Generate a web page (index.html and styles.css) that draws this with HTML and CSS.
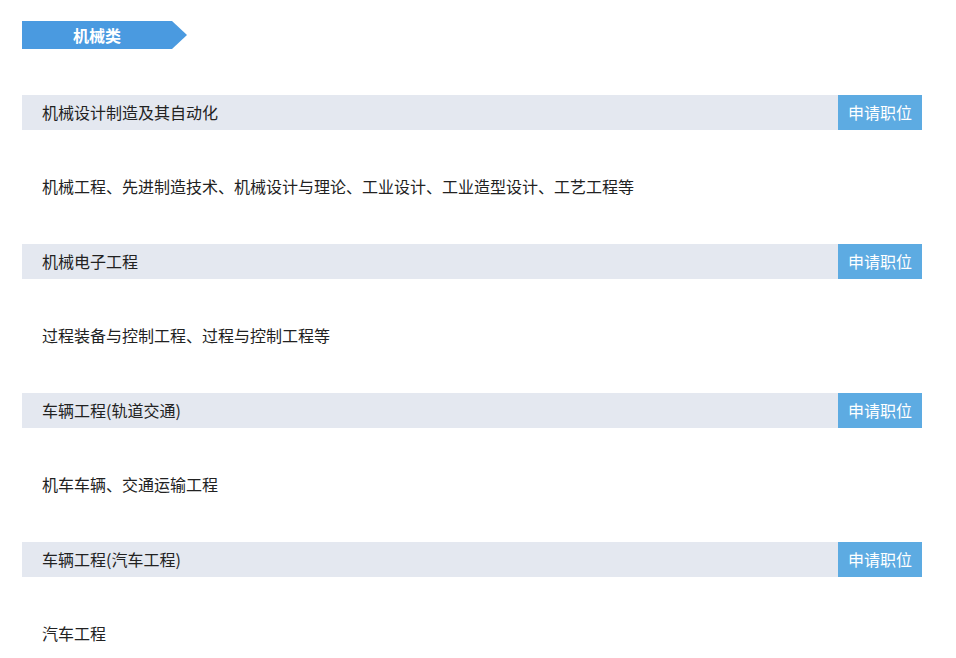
FILE: index.html
```html
<!DOCTYPE html>
<html lang="zh">
<head>
<meta charset="utf-8">
<title>机械类</title>
<link rel="stylesheet" href="styles.css">
</head>
<body>
<div class="page">
  <div class="tag"><span class="tag-text">机械类</span></div>
  <div class="list">
    <div class="item">
      <div class="item-head"><span class="item-title">机械设计制造及其自动化</span><a class="apply">申请职位</a></div>
      <div class="item-desc">机械工程、先进制造技术、机械设计与理论、工业设计、工业造型设计、工艺工程等</div>
    </div>
    <div class="item">
      <div class="item-head"><span class="item-title">机械电子工程</span><a class="apply">申请职位</a></div>
      <div class="item-desc">过程装备与控制工程、过程与控制工程等</div>
    </div>
    <div class="item">
      <div class="item-head"><span class="item-title">车辆工程(轨道交通)</span><a class="apply">申请职位</a></div>
      <div class="item-desc">机车车辆、交通运输工程</div>
    </div>
    <div class="item">
      <div class="item-head"><span class="item-title">车辆工程(汽车工程)</span><a class="apply">申请职位</a></div>
      <div class="item-desc">汽车工程</div>
    </div>
  </div>
</div>
</body>
</html>
```
FILE: styles.css
```css
html, body {
  margin: 0;
  padding: 0;
  background: #fff;
}
body {
  font-family: "Noto Sans CJK SC", "Noto Sans", sans-serif;
  font-size: 16px;
  color: #222;
}
.page {
  width: 900px;
  padding: 21px 0 0 22px;
}
.tag {
  display: flex;
  width: 165px;
  height: 28px;
  background: #4a9ae0;
  clip-path: polygon(0 0, 150px 0, 165px 50%, 150px 100%, 0 100%);
}
.tag-text {
  width: 150px;
  text-align: center;
  line-height: 28px;
  color: #fff;
  font-weight: bold;
  font-size: 16px;
}
.list {
  margin-top: 46px;
  display: flex;
  flex-direction: column;
}
.item-head {
  display: flex;
  justify-content: space-between;
  align-items: stretch;
  height: 35px;
  background: #e4e8f0;
}
.item-title {
  padding-left: 20px;
  line-height: 35px;
}
.apply {
  display: block;
  width: 84px;
  text-align: center;
  line-height: 35px;
  background: #5dabe2;
  color: #fff;
  cursor: pointer;
}
.item-desc {
  padding: 39px 0 40px 20px;
  line-height: 35px;
}
```
